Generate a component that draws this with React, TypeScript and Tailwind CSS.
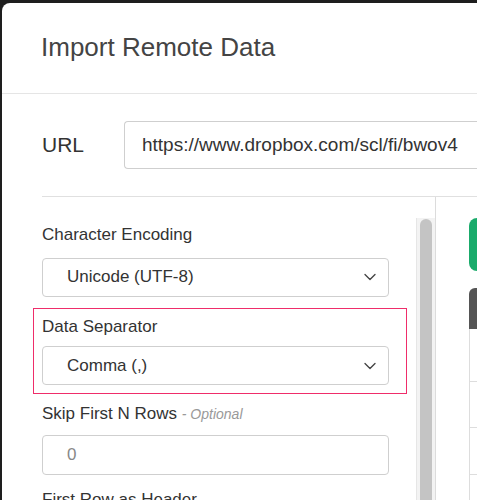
import { ChevronDown } from "lucide-react"

function Select({ value }: { value: string }) {
  return (
    <div className="flex h-[39px] w-[347px] items-center justify-between rounded-[4px] border border-[#cfcfcf] bg-white pl-[24px] pr-[8px] text-[17px] text-[#333]">
      <span>{value}</span>
      <ChevronDown className="h-[20px] w-[20px] text-[#444]" strokeWidth={1.6} />
    </div>
  )
}

export default function App() {
  return (
    <div className="h-[500px] w-[477px] overflow-hidden bg-[#1e1e1e] pl-[2px] pt-[3px]" style={{ fontFamily: "'Helvetica Neue', 'Liberation Sans', Arial, sans-serif" }}>
      <div className="h-[497px] w-[475px] overflow-hidden rounded-tl-[8px] bg-white">
        <div className="flex h-[91px] items-center border-b border-[#e5e5e5] pl-[39px] pb-[2px] text-[26px] text-[#444]">
          Import Remote Data
        </div>
        <div className="flex h-[102px] items-center pl-[40px]">
          <span className="w-[82px] text-[21px] text-[#333]">URL</span>
          <div className="flex h-[48px] flex-1 items-center rounded-l-[4px] border border-r-0 border-[#cfcfcf] pl-[17px] text-[19px] whitespace-nowrap text-[#333]">
            https://www.dropbox.com/scl/fi/bwov4
          </div>
        </div>
        <div className="ml-[40px] flex border-t border-[#e0e0e0]">
          <div className="flex w-[395px] border-r border-[#dcdcdc]">
            <div className="w-[372px]">
              <div className="pt-[25px] text-[17px] text-[#333]">Character Encoding</div>
              <div className="mt-[10px]">
                <Select value="Unicode (UTF-8)" />
              </div>
              <div className="-ml-[9px] mt-[11px] w-[374px] border border-[#ef2d6a] px-[8px] pb-[8px] pt-[5px]">
                <div className="text-[17px] text-[#333]">Data Separator</div>
                <div className="mt-[7px]">
                  <Select value="Comma (,)" />
                </div>
              </div>
              <div className="mt-[7px] text-[17px] text-[#333]">
                Skip First N Rows <span className="text-[14px] italic text-[#999]">- Optional</span>
              </div>
              <div className="mt-[8px] flex h-[40px] w-[347px] items-center rounded-[4px] border border-[#cfcfcf] pl-[24px] text-[17px] text-[#888]">
                0
              </div>
              <div className="mt-[12px] text-[17px] text-[#333]">First Row as Header</div>
            </div>
            <div className="ml-[2px] mt-[21px] w-[19px] border-l border-[#e6e6e6] bg-[#f3f3f3] px-[3px] pt-[1px]">
              <div className="h-[300px] rounded-t-full bg-[#c4c4c4]" />
            </div>
          </div>
          <div className="flex-1 pl-[33px] pt-[21px]">
            <div className="h-[53px] w-[20px] rounded-l-[8px] bg-[#1aab6b]" />
            <div className="mt-[17px] h-[41px] w-[20px] rounded-tl-[6px] bg-[#555]" />
            <div className="h-[200px] border-l border-[#ddd]">
              <div className="h-[53px] border-b border-[#ddd]" />
              <div className="h-[46px] border-b border-[#ddd]" />
              <div className="h-[47px] border-b border-[#ddd]" />
            </div>
          </div>
        </div>
      </div>
    </div>
  )
}
